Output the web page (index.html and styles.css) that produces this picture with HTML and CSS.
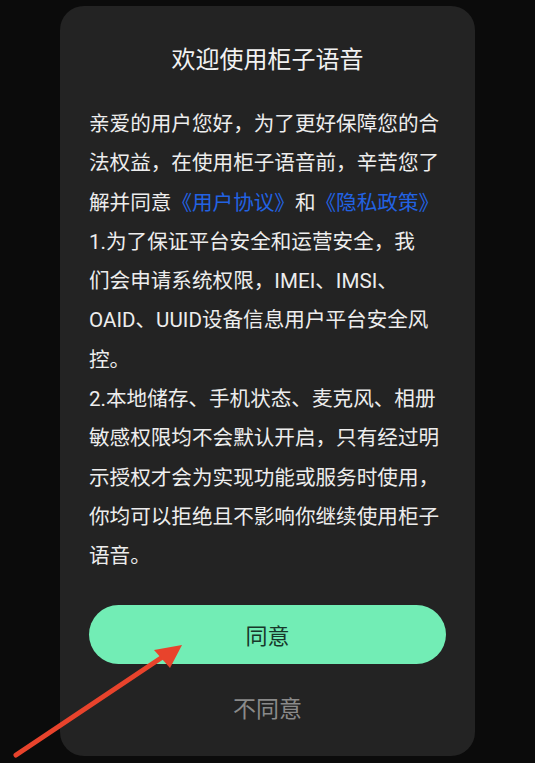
FILE: index.html
```html
<!DOCTYPE html>
<html lang="zh-CN">
<head>
<meta charset="utf-8">
<title>欢迎使用柜子语音</title>
<link rel="stylesheet" href="styles.css">
</head>
<body>
<div class="screen">
  <div class="dialog">
    <h1 class="title">欢迎使用柜子语音</h1>
    <div class="content">
      <p class="para">亲爱的用户您好，为了更好保障您的合<br>法权益，在使用柜子语音前，辛苦您了<br>解并同意<a class="link">《用户协议》</a>和<a class="link">《隐私政策》</a></p>
      <p class="para">1.为了保证平台安全和运营安全，我<br>们会申请系统权限，IMEI、IMSI、<br>OAID、UUID设备信息用户平台安全风<br>控。</p>
      <p class="para">2.本地储存、手机状态、麦克风、相册<br>敏感权限均不会默认开启，只有经过明<br>示授权才会为实现功能或服务时使用，<br>你均可以拒绝且不影响你继续使用柜子<br>语音。</p>
    </div>
    <button class="btn-agree">同意</button>
    <button class="btn-decline">不同意</button>
  </div>
  <svg class="arrow" width="535" height="763" viewBox="0 0 535 763">
    <line x1="16" y1="755" x2="170" y2="652" stroke="#e8432c" stroke-width="5" stroke-linecap="round"/>
    <polygon points="182,645 154,650 170,668" fill="#e8432c"/>
  </svg>
</div>
</body>
</html>
```
FILE: styles.css
```css
* { box-sizing: border-box; }
html, body {
  margin: 0;
  padding: 0;
  background: #0b0b0b;
}
body {
  font-family: Roboto, "Noto Sans CJK SC", "Noto Sans", sans-serif;
  color: #ededed;
}
.screen {
  position: relative;
  width: 535px;
  height: 763px;
  padding-top: 6px;
  overflow: hidden;
}
.dialog {
  width: 415px;
  height: 750px;
  margin-left: 60px;
  background: #232323;
  border-radius: 24px;
  padding: 37px 29px 0 29px;
  display: flex;
  flex-direction: column;
}
.title {
  margin: 0;
  font-size: 24px;
  font-weight: 400;
  line-height: 34px;
  text-align: center;
  color: #f2f2f2;
}
.content {
  margin-top: 28px;
  font-size: 20.6px;
  line-height: 39.3px;
  white-space: nowrap;
}
.para {
  margin: 0;
}
.link {
  color: #2262e2;
  text-decoration: none;
}
.btn-agree {
  margin-top: 28px;
  height: 59px;
  width: 100%;
  border: none;
  border-radius: 30px;
  background: #72edb5;
  color: #17382a;
  font-family: inherit;
  font-size: 22px;
  padding: 0;
}
.btn-decline {
  margin-top: 30px;
  border: none;
  background: none;
  color: #8a8a8a;
  font-family: inherit;
  font-size: 23px;
  line-height: 32px;
  padding: 0;
}
.arrow {
  position: absolute;
  left: 0;
  top: 0;
  pointer-events: none;
}
```
